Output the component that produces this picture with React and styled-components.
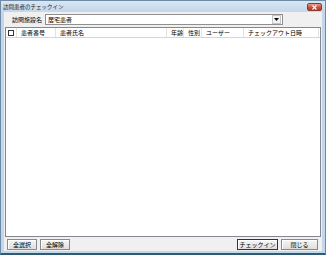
import styled, { createGlobalStyle } from 'styled-components';

const GlobalStyle = createGlobalStyle`
	html, body {
		margin: 0;
		padding: 0;
		background: #ffffff;
	}
	body {
		font-family: "Noto Sans CJK JP", sans-serif;
		font-size: 6px;
		color: #000;
	}
`;

const columns = [
	{ label: '', width: 11, check: true },
	{ label: '患者番号', width: 39 },
	{ label: '患者氏名', width: 111 },
	{ label: '年齢', width: 17 },
	{ label: '性別', width: 18 },
	{ label: 'ユーザー', width: 42 },
	{ label: 'チェックアウト日時', width: 75 },
];

const App = () => {
	return (
		<>
			<GlobalStyle />
			<Window>
				<TitleBar>
					<Title>訪問患者のチェックイン</Title>
					<CloseButton>
						<svg width='7' height='5' viewBox='0 0 7 5'>
							<path d='M1.5 0.5 L5.5 4.5 M5.5 0.5 L1.5 4.5' stroke='#fff' strokeWidth='1.1' />
						</svg>
					</CloseButton>
				</TitleBar>
				<Client>
					<FieldRow>
						<FieldLabel>訪問施設名</FieldLabel>
						<Select>
							<SelectText>居宅患者</SelectText>
							<SelectArrow>
								<svg width='5' height='3' viewBox='0 0 5 3'>
									<path d='M0 0 H5 L2.5 3 Z' fill='#000' />
								</svg>
							</SelectArrow>
						</Select>
					</FieldRow>
					<ListView>
						<HeaderRow>
							{columns.map((c, i) => (
								<HeaderCell key={i} $w={c.width} $check={c.check}>
									{c.check ? <CheckBox /> : c.label}
								</HeaderCell>
							))}
						</HeaderRow>
					</ListView>
					<ButtonBar>
						<ButtonGroup>
							<Button $w={30}>全選択</Button>
							<Button $w={30}>全解除</Button>
						</ButtonGroup>
						<ButtonGroup>
							<Button $w={41} $focus>
								チェックイン
							</Button>
							<Button $w={37}>閉じる</Button>
						</ButtonGroup>
					</ButtonBar>
				</Client>
			</Window>
		</>
	);
};

const Window = styled.div`
	width: 326px;
	height: 255px;
	box-sizing: border-box;
	background: #c4d6ea;
	border: 1px solid #6d8ba6;
	border-bottom: 2px solid #2c5c74;
	display: flex;
	flex-direction: column;
`;

const TitleBar = styled.div`
	height: 11px;
	display: flex;
	align-items: center;
	justify-content: space-between;
	padding: 0 3px 0 2px;
	background: linear-gradient(#d9e6f3, #c4d6ea);
`;

const Title = styled.span`
	font-size: 5.5px;
	color: #1a1a1a;
`;

const CloseButton = styled.div`
	width: 15px;
	height: 8px;
	margin-top: 1px;
	border-radius: 2px;
	border: 1px solid #8a3b30;
	background: linear-gradient(#e6a08c, #c8503a 55%, #b83a26);
	display: flex;
	align-items: center;
	justify-content: center;
	box-sizing: border-box;
`;

const Client = styled.div`
	flex: 1;
	margin: 0 3px 2px 3px;
	background: #f0f0f0;
	display: flex;
	flex-direction: column;
	padding: 2px 1px 1px 1px;
	min-height: 0;
`;

const FieldRow = styled.div`
	display: flex;
	align-items: center;
	height: 11px;
	padding-left: 7px;
	gap: 5px;
`;

const FieldLabel = styled.span`
	width: 28px;
	white-space: nowrap;
`;

const Select = styled.div`
	width: 238px;
	height: 11px;
	box-sizing: border-box;
	background: #fff;
	border: 1px solid #8e8f8f;
	display: flex;
	align-items: center;
	justify-content: space-between;
	padding-left: 2px;
`;

const SelectText = styled.span`
	line-height: 9px;
`;

const SelectArrow = styled.div`
	width: 7px;
	height: 7px;
	margin-right: 1px;
	border: 1px solid #c5c5c5;
	background: #f4f4f4;
	display: flex;
	align-items: center;
	justify-content: center;
`;

const ListView = styled.div`
	flex: 1;
	margin-top: 2px;
	background: #fff;
	border: 1px solid #828790;
	overflow: hidden;
`;

const HeaderRow = styled.div`
	display: flex;
	height: 9px;
	border-bottom: 1px solid #d5d5d5;
`;

const HeaderCell = styled.div`
	flex: none;
	width: ${({ $w }) => $w}px;
	box-sizing: border-box;
	height: 9px;
	border-right: 1px solid #e3e3e3;
	padding-left: ${({ $check }) => ($check ? '2px' : '4px')};
	display: flex;
	align-items: center;
	white-space: nowrap;
	overflow: hidden;
`;

const CheckBox = styled.div`
	width: 4px;
	height: 4px;
	border: 1px solid #333;
	background: #fff;
`;

const ButtonBar = styled.div`
	display: flex;
	justify-content: space-between;
	padding: 2px 3px 0 2px;
`;

const ButtonGroup = styled.div`
	display: flex;
	gap: 3px;
`;

const Button = styled.div`
	width: ${({ $w }) => $w}px;
	height: 11px;
	box-sizing: border-box;
	border: 1px solid ${({ $focus }) => ($focus ? '#333' : '#8a8a8a')};
	background: linear-gradient(#f6f6f6, #dedede);
	display: flex;
	align-items: center;
	justify-content: center;
	white-space: nowrap;
	box-shadow: inset 1px 1px 0 #fff;
`;

export default App;
